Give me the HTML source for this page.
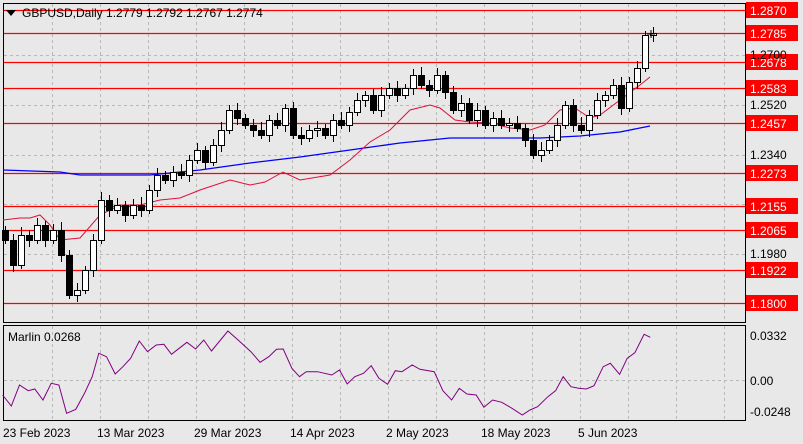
<!DOCTYPE html><html><head><style>
body{margin:0;background:#e8e8e8;width:803px;height:444px;overflow:hidden;font-family:"Liberation Sans",sans-serif}
svg{display:block}
</style></head><body>
<svg id="s" width="803" height="444" xmlns="http://www.w3.org/2000/svg" font-family="Liberation Sans, sans-serif" font-size="12">
<rect width="803" height="444" fill="#e8e8e8"/>
<g id="grid" stroke="#b8b8b8" stroke-dasharray="3,3" stroke-width="1"></g>
<rect x="3.5" y="3.5" width="742" height="319" fill="none" stroke="#000"/>
<rect x="3.5" y="325.5" width="742" height="95" fill="none" stroke="#000"/>
<g id="lv"></g>
<polyline id="blue" fill="none" stroke="#0000ff" stroke-width="1.3"/>
<polyline id="red" fill="none" stroke="#e0103a" stroke-width="1"/>
<g id="cd"></g>
<polyline id="marlin" fill="none" stroke="#800080" stroke-width="1"/>
<g id="lab"></g>
<path d="M6 10h10l-5 6z" fill="#000"/>
<text x="22" y="17" font-size="12">GBPUSD,Daily  1.2779 1.2792 1.2767 1.2774</text>
<text x="8" y="341">Marlin 0.0268</text>
<g font-size="12">
<text x="3" y="437">23 Feb 2023</text><text x="97" y="437">13 Mar 2023</text><text x="194" y="437">29 Mar 2023</text><text x="290" y="437">14 Apr 2023</text><text x="386" y="437">2 May 2023</text><text x="481" y="437">18 May 2023</text><text x="578" y="437">5 Jun 2023</text>
<text x="750" y="340">0.0332</text><text x="750" y="385">0.00</text><text x="750" y="416">-0.0248</text>
<text x="750" y="59">1.2700</text><text x="750" y="109">1.2520</text><text x="750" y="159">1.2340</text><text x="750" y="258">1.1980</text>
</g>
<path d="M647 34h8M651 30v8" stroke="#000"/>
</svg>
<script>
const S='http://www.w3.org/2000/svg';
function el(p,t,a){const e=document.createElementNS(S,t);for(const k in a)e.setAttribute(k,a[k]);p.appendChild(e);return e;}
const g=document.getElementById('grid');
for(let x=52;x<745;x+=48){el(g,'line',{x1:x+.5,y1:4,x2:x+.5,y2:322});el(g,'line',{x1:x+.5,y1:326,x2:x+.5,y2:420});}
[55,105,155,204,254].forEach(y=>el(g,'line',{x1:4,y1:y+.5,x2:745,y2:y+.5}));
el(g,'line',{x1:4,y1:380.5,x2:745,y2:380.5});
const lv=document.getElementById('lv'),lab=document.getElementById('lab');
[['1.2870',10],['1.2785',33],['1.2678',62],['1.2583',88],['1.2457',123],['1.2273',173],['1.2155',206],['1.2065',230],['1.1922',270],['1.1800',303]].forEach(([t,y])=>{
el(lv,'line',{x1:4,y1:y+.5,x2:745,y2:y+.5,stroke:'#ff0000','stroke-width':1.2});
el(lab,'rect',{x:746,y:y-8,width:52,height:16,fill:'#ff0000'});
const tx=el(lab,'text',{x:750,y:y+5,fill:'#fff'});tx.textContent=t;});
const bl=[[3,170],[60,172],[80,175],[150,175],[200,170],[250,163],[300,157],[350,150],[400,143],[450,138],[500,138],[540,138],[580,136],[620,132],[650,126]];
document.getElementById('blue').setAttribute('points',bl.join(' '));
const rd=[[3,220],[20,218],[30,218],[40,215],[50,225],[60,240],[80,238],[100,215],[120,205],[140,205],[160,200],[180,198],[200,190],[230,180],[250,185],[265,182],[283,172],[300,180],[330,175],[350,160],[370,142],[390,130],[410,110],[430,105],[440,108],[455,120],[470,122],[490,123],[510,128],[530,130],[545,125],[560,110],[575,108],[590,118],[600,115],[620,100],[640,85],[650,77]];
document.getElementById('red').setAttribute('points',rd.join(' '));
const c=[240,265,235,240,225,240,230,255,295,290,270,240,200,210,205,215,205,210,190,175,180,172,175,160,150,162,145,130,110,118,125,130,135,120,125,108,135,138,130,128,135,120,125,112,100,95,110,95,88,95,88,75,85,90,75,92,110,103,120,110,125,118,125,123,128,140,155,150,140,125,105,125,130,115,100,95,85,108,82,68,35,33];
const cd=document.getElementById('cd');
let o=230;
c.forEach((cl,i)=>{const x=5+8*i;const hi=Math.min(o,cl)-4-(i*7%5),lo=Math.max(o,cl)+4+(i*3%6);
el(cd,'line',{x1:x+.5,y1:hi,x2:x+.5,y2:lo,stroke:'#000'});
const t=Math.min(o,cl),h=Math.max(1,Math.abs(o-cl));
el(cd,'rect',{x:x-2.5,y:t+.5,width:6,height:h,fill:cl<o?'#fff':'#000',stroke:'#000'});o=cl;});
const m=[[5,525],[22,558],[38,495],[55,512],[68,507],[84,540],[100,490],[115,495],[130,580],[148,568],[165,520],[180,470],[193,400],[208,410],[225,462],[240,440],[255,415],[272,363],[288,395],[305,375],[320,373],[335,403],[350,385],[365,367],[382,387],[398,360],[413,393],[445,333],[465,360],[490,395],[508,427],[525,410],[540,388],[553,387],[570,445],[585,470],[598,455],[620,455],[648,465],[663,450],[678,492],[693,470],[710,460],[725,437],[740,475],[757,493],[772,452],[785,455],[805,435],[820,448],[848,455],[865,512],[882,540],[897,505],[912,522],[930,525],[945,562],[962,540],[980,547],[1000,565],[1020,585],[1035,570],[1050,560],[1070,530],[1085,512],[1100,470],[1115,500],[1130,505],[1145,507],[1160,497],[1178,440],[1192,430],[1210,463],[1225,415],[1240,398],[1258,343],[1270,352]];
document.getElementById('marlin').setAttribute('points',m.map(([x,y])=>(x/1.953).toFixed(1)+','+(y/3+220).toFixed(1)).join(' '));
</script>
</body></html>
